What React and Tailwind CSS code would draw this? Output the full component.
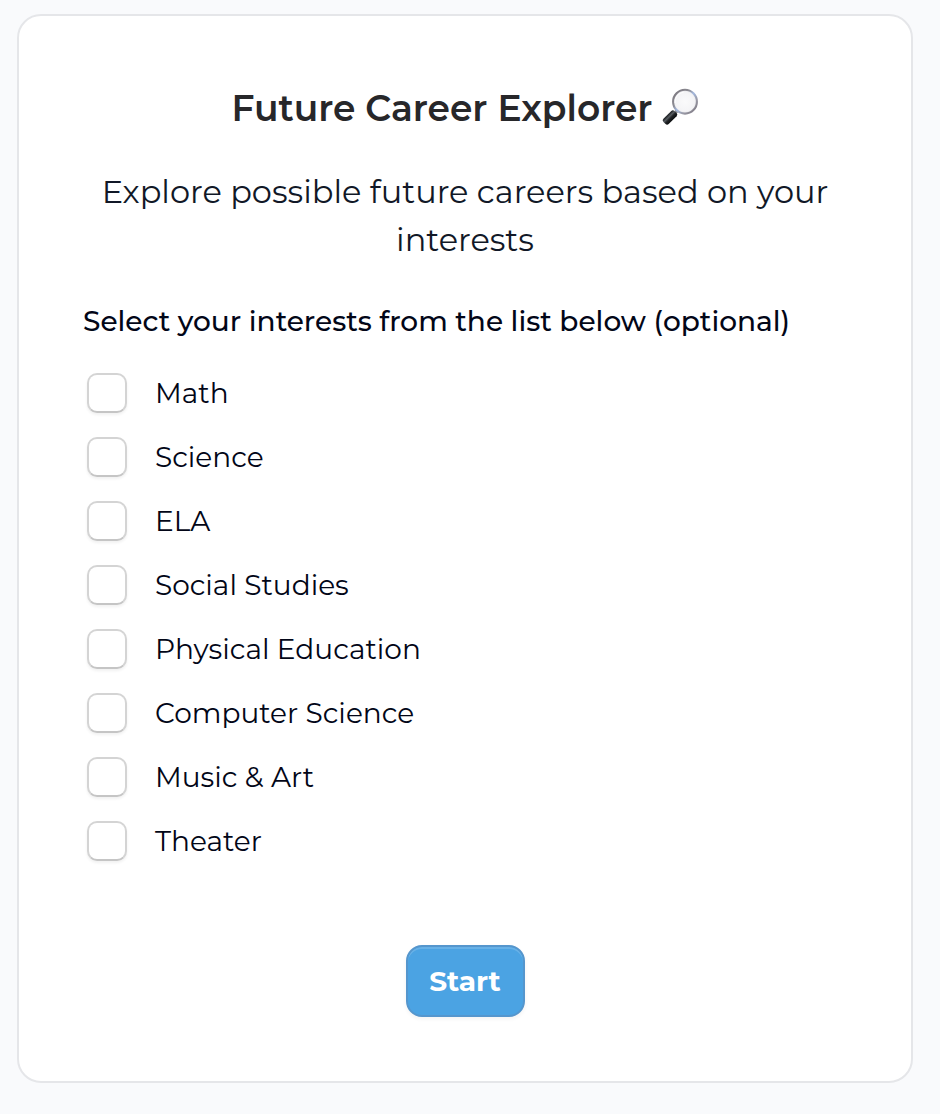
const interests = [
  'Math',
  'Science',
  'ELA',
  'Social Studies',
  'Physical Education',
  'Computer Science',
  'Music & Art',
  'Theater',
];

function MagnifierIcon() {
  return (
    <svg viewBox="0 0 37 40" className="ml-[9px] h-10 w-[37px] shrink-0" aria-hidden="true">
      <defs>
        <linearGradient id="rim" x1="0" y1="0" x2="1" y2="1">
          <stop offset="0" stopColor="#77737a" />
          <stop offset="0.35" stopColor="#8d8c94" />
          <stop offset="0.5" stopColor="#a3b9e0" />
          <stop offset="0.7" stopColor="#9a9aa6" />
          <stop offset="1" stopColor="#77717a" />
        </linearGradient>
        <linearGradient id="handle" x1="0" y1="0" x2="0" y2="1">
          <stop offset="0" stopColor="#15181b" />
          <stop offset="0.35" stopColor="#565b60" />
          <stop offset="0.6" stopColor="#202326" />
          <stop offset="1" stopColor="#090b0d" />
        </linearGradient>
        <radialGradient id="glass">
          <stop offset="0" stopColor="#fafafb" />
          <stop offset="0.8" stopColor="#f4f4f6" />
          <stop offset="1" stopColor="#e2e2e6" />
        </radialGradient>
      </defs>
      <path d="M17 21.6 12.8 26.4" stroke="#8a8b90" strokeWidth="3.4" />
      <rect x="-7.8" y="-3.7" width="15.6" height="7.4" rx="2.2" fill="url(#handle)" transform="translate(9 29.5) rotate(-45)" />
      <circle cx="24" cy="13.7" r="11.9" fill="url(#glass)" stroke="url(#rim)" strokeWidth="2.1" />
      <path d="M14 15a10 10 0 0 1 8.6-10.9" fill="none" stroke="#fff" strokeWidth="0.9" />
    </svg>
  );
}

export default function App() {
  return (
    <main className="h-[1114px] w-[940px] bg-[#f9fafc] pt-[14px] pl-[17px] font-['Montserrat','Inter',sans-serif]">
      <section className="flex h-[1069px] w-[896px] flex-col rounded-[24px] border-2 border-[#e5e6e9] bg-white px-16 pt-[68px]">
        <h1 className="flex h-12 items-center justify-center text-[36px] leading-[48px] font-semibold whitespace-nowrap text-[#27272a]">
          <span>Future Career Explorer</span>
          <MagnifierIcon />
        </h1>
        <p className="mt-9 text-center text-[32px] leading-[48px] text-[#111827]">
          Explore possible future careers based on your interests
        </p>
        <h2 className="mt-[41px] text-[28px] leading-8 font-medium whitespace-nowrap text-[#020617]">
          Select your interests from the list below (optional)
        </h2>
        <div className="mt-[36px] ml-1 flex flex-col gap-6">
          {interests.map((name) => (
            <label key={name} className="flex h-10 items-center gap-7">
              <input
                type="checkbox"
                className="h-10 w-10 shrink-0 appearance-none rounded-[10px] border-2 border-[#d4d4d4] border-b-[#c5c5c5] bg-white shadow-[0_2px_3px_rgba(0,0,0,0.06)]"
              />
              <span className="text-[28px] leading-10 text-[#020617]">{name}</span>
            </label>
          ))}
        </div>
        <button className="mt-[84px] flex h-[72px] w-[119px] items-center justify-center self-center rounded-[16px] border-2 border-[#5596cd] bg-[#4ba3e3] text-[28px] font-bold text-white shadow-[inset_0_2px_0_rgba(255,255,255,0.16),0_2px_4px_rgba(0,0,0,0.05)]">
          Start
        </button>
      </section>
    </main>
  );
}
